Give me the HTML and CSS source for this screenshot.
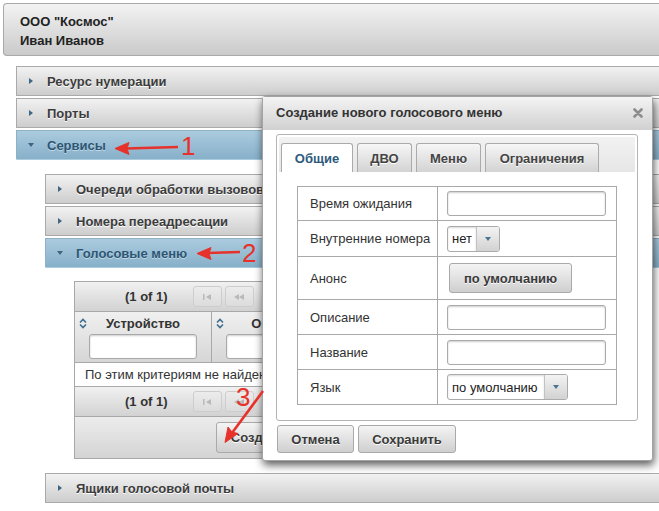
FILE: index.html
```html
<!DOCTYPE html>
<html lang="ru">
<head>
<meta charset="utf-8">
<title>Голосовые меню</title>
<link rel="stylesheet" href="styles.css">
</head>
<body>
<div class="page">
  <header class="top">
    <div class="top-line">ООО "Космос"</div>
    <div class="top-line">Иван Иванов</div>
  </header>

  <div class="acc">
    <div class="acc-h"><span class="tri tri-r"></span>Ресурс нумерации</div>
    <div class="acc-h"><span class="tri tri-r"></span>Порты</div>
    <div class="acc-h is-open"><span class="tri tri-d"></span>Сервисы</div>
    <div class="acc-body">
      <div class="acc-h"><span class="tri tri-r"></span>Очереди обработки вызовов</div>
      <div class="acc-h"><span class="tri tri-r"></span>Номера переадресации</div>
      <div class="acc-h is-open"><span class="tri tri-d"></span>Голосовые меню</div>
      <div class="acc-body inner">
        <div class="dt">
          <div class="pager">
            <span class="pager-report">(1 of 1)</span>
            <span class="pbtn"><svg width="10" height="8" viewBox="0 0 10 8"><rect x="1" y="1" width="1.5" height="6" fill="#b9b9b9"/><path d="M9 1 L4 4 L9 7 Z" fill="#b9b9b9"/></svg></span>
            <span class="pbtn"><svg width="12" height="8" viewBox="0 0 12 8"><path d="M6 1 L1 4 L6 7 Z M11 1 L6 4 L11 7 Z" fill="#b9b9b9"/></svg></span>
          </div>
          <div class="dt-head">
            <div class="col col-1">
              <div class="col-title">
                <svg class="sort" width="8" height="11" viewBox="0 0 8 11"><path d="M1 4.5 L4 1.5 L7 4.5 M1 6.5 L4 9.5 L7 6.5" fill="none" stroke="#3d6e8f" stroke-width="1.6"/></svg>
                <span>Устройство</span>
                <span class="sort-pad"></span>
              </div>
              <input class="filter" type="text">
            </div>
            <div class="col col-2">
              <div class="col-title">
                <svg class="sort" width="8" height="11" viewBox="0 0 8 11"><path d="M1 4.5 L4 1.5 L7 4.5 M1 6.5 L4 9.5 L7 6.5" fill="none" stroke="#3d6e8f" stroke-width="1.6"/></svg>
                <span>Огранич.</span>
                <span class="sort-pad"></span>
              </div>
              <input class="filter" type="text">
            </div>
            <div class="col col-3"></div>
          </div>
          <div class="dt-empty">По этим критериям не найдено записей</div>
          <div class="pager">
            <span class="pager-report">(1 of 1)</span>
            <span class="pbtn"><svg width="10" height="8" viewBox="0 0 10 8"><rect x="1" y="1" width="1.5" height="6" fill="#b9b9b9"/><path d="M9 1 L4 4 L9 7 Z" fill="#b9b9b9"/></svg></span>
            <span class="pbtn"><svg width="12" height="8" viewBox="0 0 12 8"><path d="M6 1 L1 4 L6 7 Z M11 1 L6 4 L11 7 Z" fill="#b9b9b9"/></svg></span>
          </div>
          <div class="dt-foot"><button class="btn btn-create">Создать</button></div>
        </div>
      </div>
      <div class="acc-h"><span class="tri tri-r"></span>Ящики голосовой почты</div>
    </div>
  </div>
</div>

<div class="dialog">
  <div class="dlg-head">
    <span class="dlg-title">Создание нового голосового меню</span>
    <svg class="dlg-close" width="10" height="10" viewBox="0 0 10 10"><path d="M1.5 1.5 L8.5 8.5 M8.5 1.5 L1.5 8.5" stroke="#8c8c8c" stroke-width="2.6" stroke-linecap="round"/></svg>
  </div>
  <div class="dlg-body">
    <div class="tabs">
      <div class="tab-bar">
        <span class="tab tab-general is-active">Общие</span>
        <span class="tab tab-dvo">ДВО</span>
        <span class="tab tab-menu">Меню</span>
        <span class="tab tab-limits">Ограничения</span>
      </div>
      <div class="tab-panel">
        <table class="form">
          <tr class="r-34"><td class="lbl">Время ожидания</td><td class="val"><input class="txt" type="text"></td></tr>
          <tr class="r-36"><td class="lbl">Внутренние номера</td><td class="val">
            <span class="combo combo-small"><span class="combo-text">нет</span><span class="combo-arrow"><span class="tri-s"></span></span></span>
          </td></tr>
          <tr class="r-43"><td class="lbl">Анонс</td><td class="val"><button class="btn btn-default">по умолчанию</button></td></tr>
          <tr class="r-35"><td class="lbl">Описание</td><td class="val"><input class="txt" type="text"></td></tr>
          <tr class="r-35"><td class="lbl">Название</td><td class="val"><input class="txt" type="text"></td></tr>
          <tr class="r-35"><td class="lbl">Язык</td><td class="val">
            <span class="combo combo-wide"><span class="combo-text">по умолчанию</span><span class="combo-arrow"><span class="tri-s"></span></span></span>
          </td></tr>
        </table>
      </div>
    </div>
    <div class="dlg-actions">
      <button class="btn btn-cancel">Отмена</button>
      <button class="btn btn-save">Сохранить</button>
    </div>
  </div>
</div>

<svg class="marks" width="659" height="511" viewBox="0 0 659 511">
  <g fill="#e6322a" stroke="#e6322a">
    <path d="M178 147 L126 148.5" stroke-width="2.6" fill="none"/>
    <path d="M115 148.5 L129 142.5 L127 148.5 L129 154.5 Z" stroke-width="1"/>
    <path d="M240 252 L207 253" stroke-width="2.6" fill="none"/>
    <path d="M197 253.5 L211 247.5 L209 253.5 L211 259.5 Z" stroke-width="1"/>
    <path d="M263 391 L232 433" stroke-width="2.6" fill="none"/>
    <path d="M225 442.5 L228 427 L232 432 L238 433.5 Z" stroke-width="1"/>
  </g>
  <g class="digit" fill="#e6322a">
    <text x="181" y="155">1</text>
    <text x="242" y="262">2</text>
    <text x="236" y="406">3</text>
  </g>
</svg>
</body>
</html>
```

FILE: styles.css
```css
* { box-sizing: border-box; }

html, body {
  margin: 0;
  padding: 0;
  overflow: hidden;
}

body {
  width: 659px;
  height: 511px;
  position: relative;
  background: #fff;
  font-family: "Liberation Sans", Arial, sans-serif;
  font-size: 13px;
  color: #333;
}

.page {
  width: 659px;
  padding: 3px 0 0 3px;
}

/* ---------- header ---------- */
.top {
  height: 53px;
  border: 1px solid #a9a9a9;
  border-right: none;
  border-radius: 4px 0 0 4px;
  background: linear-gradient(#f3f3f3, #cacaca);
  padding: 8px 0 0 16px;
  font-weight: bold;
  color: #222;
}

.top-line { line-height: 19px; }

/* ---------- accordion ---------- */
.acc { margin: 10px 0 0 13px; }

.acc-h {
  height: 30px;
  margin-bottom: 2px;
  display: flex;
  align-items: center;
  padding-left: 12px;
  border: 1px solid #aaaaaa;
  border-right: none;
  background: linear-gradient(#f2f2f2, #cdcdcd);
  font-weight: bold;
  color: #3c3c3c;
  text-shadow: 0 1px 0 #fff;
  white-space: nowrap;
  overflow: hidden;
}

.acc-h.is-open {
  border-color: #8fb1c6;
  border-bottom-color: transparent;
  background: linear-gradient(#abcbdf, #87b0c9);
  color: #2c5673;
  text-shadow: 0 1px 0 rgba(255,255,255,.45);
}

.tri {
  flex: none;
  width: 0;
  height: 0;
  margin-right: 14px;
}

.tri-r {
  border-top: 3.5px solid transparent;
  border-bottom: 3.5px solid transparent;
  border-left: 4px solid #3e6681;
}

.tri-d {
  margin-left: -1px;
  margin-right: 13px;
  border-left: 3.5px solid transparent;
  border-right: 3.5px solid transparent;
  border-top: 4px solid #3e6681;
}

.acc-body { padding: 12px 0 0 29px; }

.acc-body.inner { padding: 11px 0 14px 29px; }

/* ---------- data table ---------- */
.dt {
  width: 367px;
  border: 1px solid #a8a8a8;
}

.pager {
  height: 30px;
  display: flex;
  align-items: center;
  padding-left: 50px;
  background: linear-gradient(#f1f1f1, #d2d2d2);
  border-bottom: 1px solid #a8a8a8;
}

.pager-report {
  font-weight: bold;
  color: #333;
  margin-right: 25px;
}

.pbtn {
  width: 29px;
  height: 21px;
  margin-right: 3px;
  display: flex;
  align-items: center;
  justify-content: center;
  border: 1px solid #cdcdcd;
  border-radius: 3px;
  background: linear-gradient(#ececec, #dcdcdc);
}

.dt-head {
  height: 51px;
  display: flex;
  background: linear-gradient(#f0f0f0, #d6d6d6);
  border-bottom: 1px solid #a8a8a8;
}

.col {
  width: 137px;
  display: flex;
  flex-direction: column;
  align-items: center;
  border-right: 1px solid #a8a8a8;
}

.col-3 { flex: 1; border-right: none; }

.col-title {
  width: 100%;
  height: 21px;
  display: grid;
  grid-template-columns: 8px 1fr 8px;
  align-items: center;
  padding: 0 4px;
  margin-top: 1px;
  font-weight: bold;
  color: #333;
  text-align: center;
}

.sort { display: block; }

.filter {
  width: 108px;
  height: 25px;
  border: 1px solid #a9a9a9;
  border-radius: 3px;
  background: #fff;
  box-shadow: inset 0 1px 2px rgba(0,0,0,.2);
  padding: 0 4px;
  font: inherit;
}

.dt-empty {
  height: 24px;
  display: flex;
  align-items: center;
  padding-left: 10px;
  border-bottom: 1px solid #a8a8a8;
  white-space: nowrap;
  overflow: hidden;
}

.dt-foot {
  height: 41px;
  display: flex;
  justify-content: center;
  padding-top: 5px;
  background: linear-gradient(#ececec, #d4d4d4);
}

/* ---------- buttons ---------- */
.btn {
  font-family: inherit;
  font-size: 13px;
  font-weight: bold;
  color: #3a3a3a;
  text-shadow: 0 1px 0 #fff;
  border: 1px solid #a9a9a9;
  border-radius: 3px;
  background: linear-gradient(#f4f4f4, #cfcfcf);
  padding: 0;
  cursor: pointer;
}

.btn-create { width: 83px; height: 31px; }

/* ---------- dialog ---------- */
.dialog {
  position: absolute;
  left: 262px;
  top: 96px;
  width: 391px;
  height: 365px;
  background: #fff;
  border: 1px solid #a3a3a3;
  border-radius: 3px;
  box-shadow: 1px 4px 9px rgba(0,0,0,.65);
}

.dlg-head {
  height: 33px;
  display: flex;
  align-items: center;
  justify-content: space-between;
  padding: 0 9px 2px 13px;
  background: linear-gradient(#f4f4f4, #d0d0d0);
}

.dlg-title {
  font-weight: bold;
  color: #333;
}

.dlg-body { padding: 4px 14px 0 13px; }

.tabs {
  height: 287px;
  border: 1px solid #b4b4b4;
  border-radius: 3px;
  padding: 2px;
}

.tab-bar {
  height: 35px;
  display: flex;
  align-items: flex-end;
  gap: 4px;
  padding-left: 2px;
  background: linear-gradient(#f2f2f2, #e6e6e6);
}

.tab {
  height: 29px;
  display: flex;
  align-items: center;
  justify-content: center;
  border: 1px solid #aaaaaa;
  border-bottom: none;
  border-radius: 3px 3px 0 0;
  background: linear-gradient(#f6f6f6, #d3d3d3);
  font-weight: bold;
  color: #444;
  text-shadow: 0 1px 0 #fff;
  white-space: nowrap;
}

.tab-general { width: 72px; }
.tab-dvo { width: 55px; }
.tab-menu { width: 65px; }
.tab-limits { width: 114px; }

.tab.is-active {
  background: #fff;
  color: #2d5b7c;
}

.tab-panel { padding: 14px 0 0 18px; }

.form {
  width: 320px;
  border-collapse: collapse;
}

.form td {
  border: 1px solid #a9a9a9;
  padding: 0;
  vertical-align: middle;
}

.r-34 { height: 34px; }
.r-35 { height: 35px; }
.r-36 { height: 36px; }
.r-43 { height: 43px; }

.form .lbl {
  width: 140px;
  padding-left: 12px;
  color: #333;
  white-space: nowrap;
}

.form .val { padding-left: 9px; }

.txt {
  display: block;
  width: 159px;
  height: 25px;
  border: 1px solid #ababab;
  border-radius: 3px;
  box-shadow: inset 0 1px 2px rgba(0,0,0,.2);
  padding: 0 4px;
  font: inherit;
}

.combo {
  display: flex;
  height: 26px;
  border: 1px solid #ababab;
  border-radius: 3px;
  overflow: hidden;
  background: #fff;
}

.combo-small { width: 53px; }
.combo-wide { width: 121px; }

.combo-text {
  flex: 1;
  display: flex;
  align-items: center;
  padding-left: 4px;
  color: #222;
  box-shadow: inset 0 1px 2px rgba(0,0,0,.15);
  white-space: nowrap;
}

.combo-arrow {
  width: 23px;
  flex: none;
  display: flex;
  align-items: center;
  justify-content: center;
  border-left: 1px solid #c2c2c2;
  background: linear-gradient(#f3f3f3, #d2d2d2);
}

.tri-s {
  width: 0;
  height: 0;
  border-left: 3.5px solid transparent;
  border-right: 3.5px solid transparent;
  border-top: 4px solid #4a7592;
}

.btn-default {
  display: block;
  margin-left: 2px;
  width: 123px;
  height: 30px;
}

.dlg-actions {
  display: flex;
  gap: 4px;
  padding: 4px 0 0 1px;
}

.btn-cancel { width: 77px; height: 28px; }
.btn-save { width: 98px; height: 28px; }

/* ---------- annotations ---------- */
.marks {
  position: absolute;
  left: 0;
  top: 0;
  pointer-events: none;
}

.digit text {
  font-family: "Liberation Sans", Arial, sans-serif;
  font-size: 26px;
}
```
